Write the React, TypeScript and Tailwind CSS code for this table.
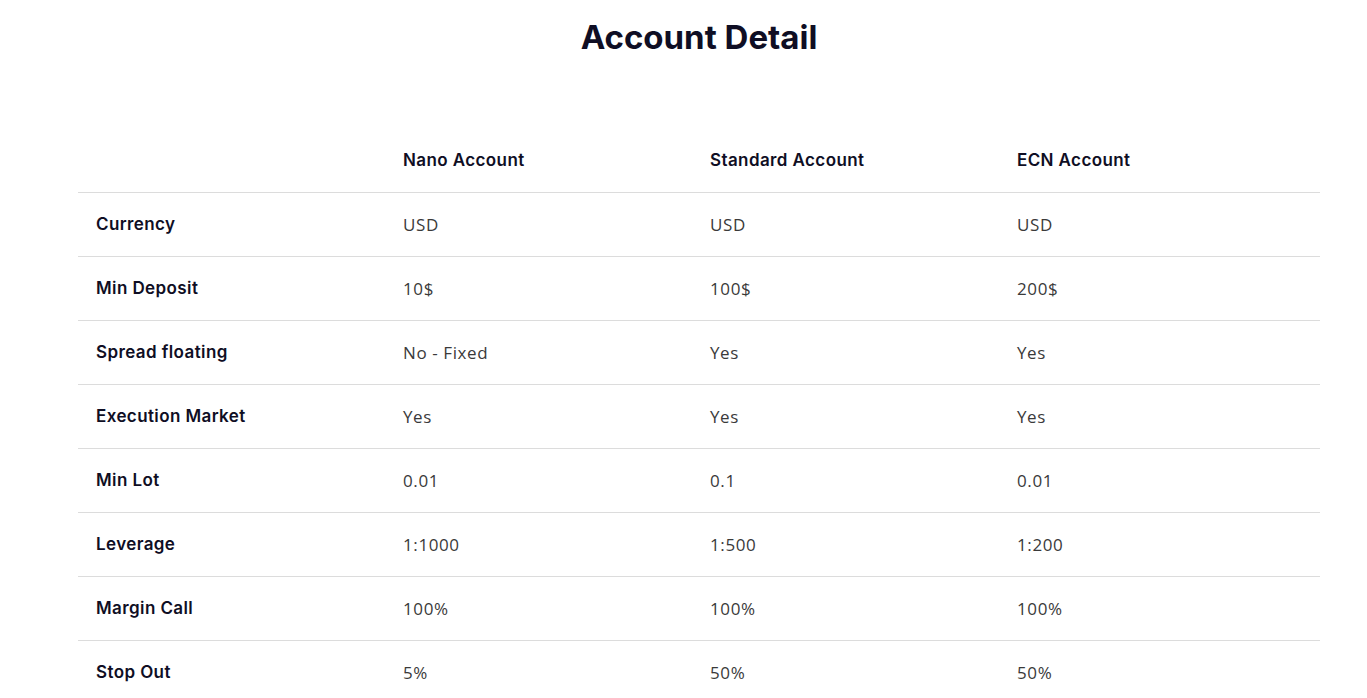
import React from "react";

interface Row {
  label: string;
  nano: string;
  standard: string;
  ecn: string;
}

const rows: Row[] = [
  { label: "Currency", nano: "USD", standard: "USD", ecn: "USD" },
  { label: "Min Deposit", nano: "10$", standard: "100$", ecn: "200$" },
  { label: "Spread floating", nano: "No - Fixed", standard: "Yes", ecn: "Yes" },
  { label: "Execution Market", nano: "Yes", standard: "Yes", ecn: "Yes" },
  { label: "Min Lot", nano: "0.01", standard: "0.1", ecn: "0.01" },
  { label: "Leverage", nano: "1:1000", standard: "1:500", ecn: "1:200" },
  { label: "Margin Call", nano: "100%", standard: "100%", ecn: "100%" },
  { label: "Stop Out", nano: "5%", standard: "50%", ecn: "50%" },
];

const headFont = { fontFamily: "Inter, 'Liberation Sans', sans-serif" };
const valueFont = { fontFamily: "'Open Sans', 'Liberation Sans', sans-serif" };

const App = () => {
  return (
    <div className="min-h-screen bg-white pt-[17px]">
      <div className="mx-[78px] w-[1242px]">
        <h1
          className="text-center text-[33px] leading-[40px] font-bold text-[#0f0e24]"
          style={headFont}
        >
          Account Detail
        </h1>

        <div className="mt-[72px]">
          {/* Header row */}
          <div
            className="grid h-[64px] grid-cols-[307px_307px_307px_1fr] items-center border-b border-[#dcdcdc] text-[17px] font-semibold tracking-[0.4px] text-[#0f0e24]"
            style={headFont}
          >
            <div className="pl-[18px]" />
            <div className="pl-[18px]">Nano Account</div>
            <div className="pl-[18px]">Standard Account</div>
            <div className="pl-[18px]">ECN Account</div>
          </div>

          {/* Body rows */}
          {rows.map((row) => (
            <div
              key={row.label}
              className="grid h-[64px] grid-cols-[307px_307px_307px_1fr] items-center border-b border-[#dcdcdc]"
            >
              <div
                className="pl-[18px] text-[17px] font-semibold tracking-[0.4px] text-[#0f0e24]"
                style={headFont}
              >
                {row.label}
              </div>
              <div className="pl-[18px] text-[17px] tracking-[0.6px] text-[#3a3a3a]" style={valueFont}>
                {row.nano}
              </div>
              <div className="pl-[18px] text-[17px] tracking-[0.6px] text-[#3a3a3a]" style={valueFont}>
                {row.standard}
              </div>
              <div className="pl-[18px] text-[17px] tracking-[0.6px] text-[#3a3a3a]" style={valueFont}>
                {row.ecn}
              </div>
            </div>
          ))}
        </div>
      </div>
    </div>
  );
};

export default App;
